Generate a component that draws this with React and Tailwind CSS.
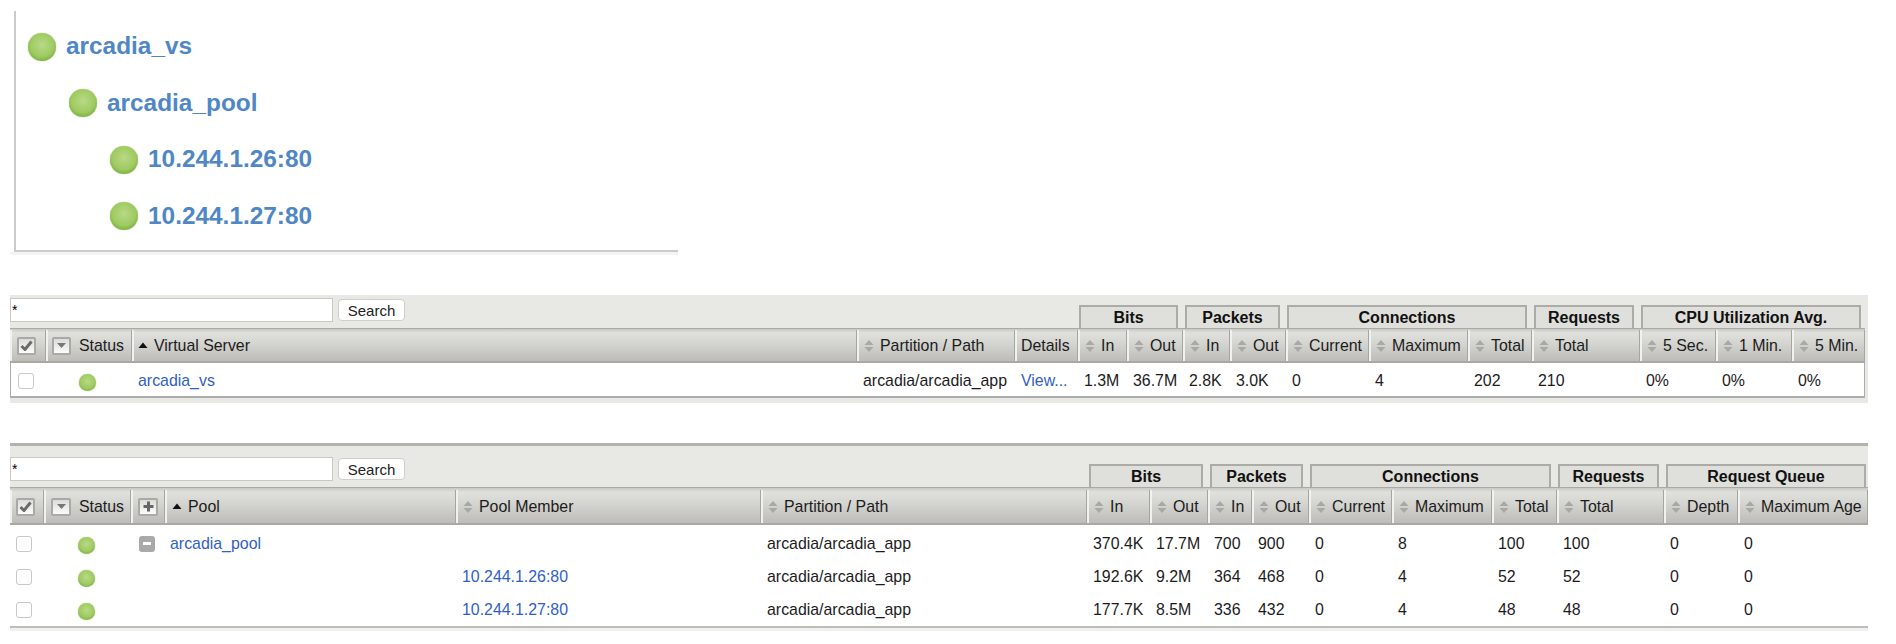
import React from "react";

const vsCols = "grid grid-cols-[36px_86px_725px_158px_63px_49px_56px_47px_56px_83px_99px_64px_108px_76px_76px_73px]";
const poolCols = "grid grid-cols-[34px_87px_34px_291px_305px_326px_63px_58px_44px_57px_83px_100px_65px_107px_74px_130px]";

const vsTabs = [
    ["Bits", "w-[99px]"],
    ["Packets", "w-[95px]"],
    ["Connections", "w-[240px]"],
    ["Requests", "w-[100px]"],
    ["CPU Utilization Avg.", "w-[220px]"],
];
const poolTabs = [
    ["Bits", "w-[114px]"],
    ["Packets", "w-[93px]"],
    ["Connections", "w-[241px]"],
    ["Requests", "w-[101px]"],
    ["Request Queue", "w-[200px]"],
];

const vsHeads = ["In", "Out", "In", "Out", "Current", "Maximum", "Total", "Total", "5 Sec.", "1 Min.", "5 Min."];
const poolHeads = ["In", "Out", "In", "Out", "Current", "Maximum", "Total", "Total", "Depth", "Maximum Age"];

const poolRows = [
    { pool: "arcadia_pool", member: "", vals: ["370.4K", "17.7M", "700", "900", "0", "8", "100", "100", "0", "0"] },
    { pool: "", member: "10.244.1.26:80", vals: ["192.6K", "9.2M", "364", "468", "0", "4", "52", "52", "0", "0"] },
    { pool: "", member: "10.244.1.27:80", vals: ["177.7K", "8.5M", "336", "432", "0", "4", "48", "48", "0", "0"] },
];

const Dot = ({ size = "w-[17px] h-[17px]" }) => (
    <span className={`block shrink-0 rounded-full ${size} bg-[radial-gradient(circle_at_50%_42%,#b8d987_0%,#9fca60_55%,#5f9c2b_95%)] shadow-[0_0_1px_#5f9c2b]`} />
);

const Sort = () => (
    <svg width="10" height="14" viewBox="0 0 10 14" className="shrink-0">
        <path d="M5 1 L9.5 6 H0.5 Z M0.5 8 H9.5 L5 13 Z" fill="#a8a8a4" />
    </svg>
);

const SortUp = () => (
    <svg width="10" height="7" viewBox="0 0 10 7" className="shrink-0">
        <path d="M5 0.5 L9.5 6 H0.5 Z" fill="#111" />
    </svg>
);

const HeadBox = ({ children, className = "w-[19px]" }) => (
    <span className={`flex h-[18px] items-center justify-center rounded-[2px] border-2 border-[#a9a9a5] bg-[linear-gradient(#dcdcd8,#fbfbfa)] ${className}`}>
        {children}
    </span>
);

const Check = () => (
    <svg width="13" height="11" viewBox="0 0 13 11">
        <path d="M1.5 6 L5 9.5 L11.5 1.5" fill="none" stroke="#6b6b68" strokeWidth="3" />
    </svg>
);

const Caret = () => (
    <svg width="9" height="5" viewBox="0 0 9 5">
        <path d="M0 0 H9 L4.5 5 Z" fill="#777" />
    </svg>
);

const Plus = () => (
    <svg width="11" height="11" viewBox="0 0 11 11">
        <path d="M5.5 0.5 V10.5 M0.5 5.5 H10.5" stroke="#666" strokeWidth="3" />
    </svg>
);

const RowBox = () => <span className="block h-4 w-4 rounded-[3px] border border-[#c9c9c9] bg-white" />;

const Head = ({ children, className = "" }) => (
    <div className={`flex items-center overflow-hidden whitespace-nowrap border-l-2 border-r border-l-[#f1f1ee] border-r-[#a5a5a1] ${className}`}>
        {children}
    </div>
);

const SortHead = ({ label }) => (
    <Head className="pl-[5px]">
        <Sort />
        <span className="ml-[6px]">{label}</span>
    </Head>
);

const Toolbar = ({ tabs, offset, className }) => (
    <div className={`flex items-start ${className}`}>
        <input
            readOnly
            value="*"
            className="h-6 w-[323px] border border-[#c8c8c4] bg-white px-px text-sm text-black outline-none"
        />
        <button className="ml-[5px] mt-px h-[22px] w-[67px] rounded-[4px] border border-[#cfcfcb] bg-white text-[15px] leading-none text-[#222]">
            Search
        </button>
        <div className={`flex gap-[7px] self-end ${offset}`}>
            {tabs.map(([label, w]) => (
                <div
                    key={label}
                    className={`flex h-[23px] items-center justify-center border-2 border-b-0 border-[#ababa7] bg-[#dfdfdb] text-[16px] font-bold leading-none text-[#111] ${w}`}
                >
                    {label}
                </div>
            ))}
        </div>
    </div>
);

const HeadGradient = "bg-[linear-gradient(#c9c8c4_0%,#e0e0dc_12%,#d4d4d0_45%,#bdbcb8_100%)] border-t border-b-2 border-t-[#a9a9a5] border-b-[#a9a8a3]";

const Cell = ({ children, className = "" }) => (
    <div className={`flex items-center whitespace-nowrap pl-[5px] ${className}`}>{children}</div>
);

const Link = ({ children }) => <span className="text-[#2f60c8]">{children}</span>;

export default function App() {
    return (
        <div className="h-[644px] w-[1896px] overflow-hidden bg-white font-['Liberation_Sans',Arial,sans-serif] text-[15.9px] text-[#1c1c1c]">
            {/* tree */}
            <div className="pt-[11px]">
                <div className="ml-[14px] flex h-[241px] w-[664px] flex-col gap-[29.5px] border-b-2 border-l-2 border-[#cbcbcb] pl-3 pt-[22px] text-[24.4px] font-bold leading-none text-[#4f87c6]">
                    <div className="flex h-[27px] items-center gap-[10px]"><Dot size="w-[28px] h-[28px]" />arcadia_vs</div>
                    <div className="ml-[41px] flex h-[27px] items-center gap-[10px]"><Dot size="w-[28px] h-[28px]" />arcadia_pool</div>
                    <div className="ml-[82px] flex h-[27px] items-center gap-[10px]"><Dot size="w-[28px] h-[28px]" />10.244.1.26:80</div>
                    <div className="ml-[82px] flex h-[27px] items-center gap-[10px]"><Dot size="w-[28px] h-[28px]" />10.244.1.27:80</div>
                </div>
                <div className="ml-[10px] h-[3px] w-[668px] bg-[#f4f4f4]" />
            </div>

            {/* virtual servers */}
            <div className="ml-[10px] mt-[40px] h-[108px] w-[1858px] bg-[#e8e8e4]">
                <Toolbar tabs={vsTabs} offset="ml-[674px]" className="h-[33px] pt-[3px]" />
                <div className={`${vsCols} h-[35px] w-[1855px] pt-px ${HeadGradient}`}>
                    <Head className="justify-center border-l-0 pr-1"><HeadBox><Check /></HeadBox></Head>
                    <Head className="pl-[4px]"><HeadBox><Caret /></HeadBox><span className="ml-2">Status</span></Head>
                    <Head className="pl-[4px]"><SortUp /><span className="ml-[6px]">Virtual Server</span></Head>
                    <SortHead label="Partition / Path" />
                    <Head className="pl-[4px]">Details</Head>
                    {vsHeads.map((h, i) => <SortHead key={i} label={h} />)}
                </div>
                <div className={`${vsCols} h-[35px] w-[1855px] border-x border-b-2 border-[#adadad] bg-white pt-[2px]`}>
                    <Cell className="pl-[7px]"><RowBox /></Cell>
                    <Cell className="pt-[3px] pl-[32px]"><Dot /></Cell>
                    <Cell className="pl-[3px]"><Link>arcadia_vs</Link></Cell>
                    <Cell>arcadia/arcadia_app</Cell>
                    <Cell className="pl-[4px]"><Link>View...</Link></Cell>
                    {["1.3M", "36.7M", "2.8K", "3.0K", "0", "4", "202", "210", "0%", "0%", "0%"].map((v, i) => (
                        <Cell key={i}>{v}</Cell>
                    ))}
                </div>
            </div>

            {/* pools */}
            <div className="ml-[10px] mt-[40px] w-[1858px] border-t-[3px] border-[#b2b2ae] bg-[#e8e8e4]">
                <Toolbar tabs={poolTabs} offset="ml-[684px]" className="h-[41px] pt-[11px]" />
                <div className={`${poolCols} h-[38px] pt-[2px] ${HeadGradient}`}>
                    <Head className="justify-center border-l-0 pr-1"><HeadBox><Check /></HeadBox></Head>
                    <Head className="pl-[5px]"><HeadBox className="w-5"><Caret /></HeadBox><span className="ml-2">Status</span></Head>
                    <Head className="pl-[5px]"><HeadBox className="w-5"><Plus /></HeadBox></Head>
                    <Head className="pl-[5px]"><SortUp /><span className="ml-[6px]">Pool</span></Head>
                    <SortHead label="Pool Member" />
                    <SortHead label="Partition / Path" />
                    {poolHeads.map((h, i) => <SortHead key={i} label={h} />)}
                </div>
                <div className="border-b-2 border-[#bcbcb8] bg-white pt-[2px]">
                    {poolRows.map((r, i) => (
                        <div key={i} className={`${poolCols} h-[33px]`}>
                            <Cell className="pl-[6px]"><RowBox /></Cell>
                            <Cell className="pt-[3px] pl-[34px]"><Dot /></Cell>
                            <Cell className="pl-[8px]">
                                {r.pool && (
                                    <span className="flex h-4 w-4 items-center justify-center rounded-[3px] bg-[#a9a9a9]">
                                        <span className="h-[3px] w-2 bg-white" />
                                    </span>
                                )}
                            </Cell>
                            <Cell><Link>{r.pool}</Link></Cell>
                            <Cell className="pl-[6px]"><Link>{r.member}</Link></Cell>
                            <Cell className="pl-[6px]">arcadia/arcadia_app</Cell>
                            {r.vals.map((v, j) => <Cell key={j} className="pl-[6px]">{v}</Cell>)}
                        </div>
                    ))}
                </div>
            </div>
            <div className="ml-[10px] h-[3px] w-[1858px] bg-[#f0f0ee]" />
        </div>
    );
}
